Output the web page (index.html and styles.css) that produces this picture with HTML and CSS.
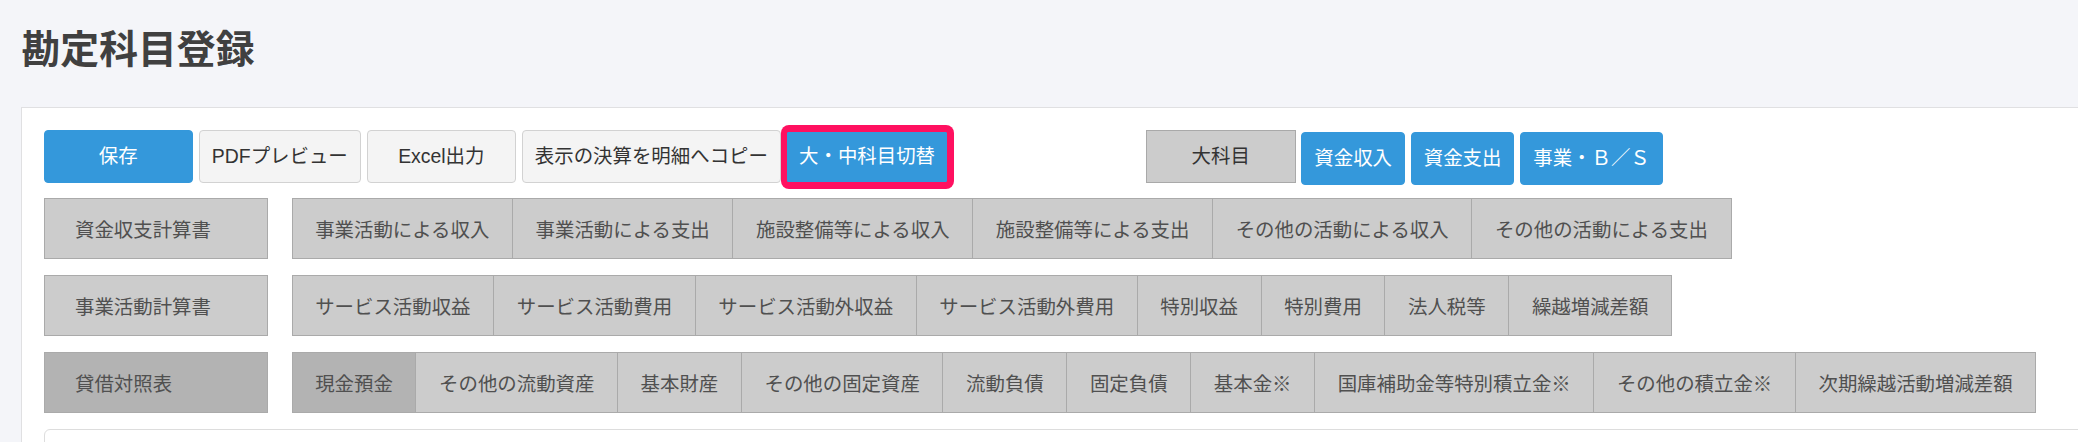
FILE: index.html
```html
<!DOCTYPE html>
<html lang="ja">
<head>
<meta charset="utf-8">
<title>勘定科目登録</title>
<link rel="stylesheet" href="styles.css">
</head>
<body>
<div class="page">
  <h1 class="title">勘定科目登録</h1>
  <div class="card">
    <div class="toolbar">
      <button class="btn btn-primary wide">保存</button>
      <button class="btn">PDFプレビュー</button>
      <button class="btn wide">Excel出力</button>
      <button class="btn">表示の決算を明細へコピー</button>
      <div class="highlight"><button class="btn btn-primary btn-inner">大・中科目切替</button></div>
      <button class="btn btn-flat wide push">大科目</button>
      <button class="btn btn-primary low">資金収入</button>
      <button class="btn btn-primary low">資金支出</button>
      <button class="btn btn-primary low">事業・Ｂ／Ｓ</button>
    </div>
    <div class="rows">
      <div class="row">
        <div class="label">資金収支計算書</div>
        <div class="tabs">
          <div class="tab">事業活動による収入</div>
          <div class="tab">事業活動による支出</div>
          <div class="tab">施設整備等による収入</div>
          <div class="tab">施設整備等による支出</div>
          <div class="tab">その他の活動による収入</div>
          <div class="tab">その他の活動による支出</div>
        </div>
      </div>
      <div class="row">
        <div class="label">事業活動計算書</div>
        <div class="tabs">
          <div class="tab">サービス活動収益</div>
          <div class="tab">サービス活動費用</div>
          <div class="tab">サービス活動外収益</div>
          <div class="tab">サービス活動外費用</div>
          <div class="tab">特別収益</div>
          <div class="tab">特別費用</div>
          <div class="tab">法人税等</div>
          <div class="tab">繰越増減差額</div>
        </div>
      </div>
      <div class="row">
        <div class="label active">貸借対照表</div>
        <div class="tabs">
          <div class="tab active">現金預金</div>
          <div class="tab">その他の流動資産</div>
          <div class="tab">基本財産</div>
          <div class="tab">その他の固定資産</div>
          <div class="tab">流動負債</div>
          <div class="tab">固定負債</div>
          <div class="tab">基本金※</div>
          <div class="tab">国庫補助金等特別積立金※</div>
          <div class="tab">その他の積立金※</div>
          <div class="tab">次期繰越活動増減差額</div>
        </div>
      </div>
    </div>
    <div class="panel"></div>
  </div>
</div>
</body>
</html>
```

FILE: styles.css
```css
html, body {
  margin: 0;
  padding: 0;
  overflow: hidden;
  background: #f4f5f9;
}

body {
  font-family: "Liberation Sans", "Noto Sans CJK JP", sans-serif;
  font-size: 19.43px;
  color: #333;
}

.page {
  box-sizing: border-box;
  padding: 27.3px 0 0 20.5px;
  width: 2140px;
  height: 442px;
  overflow: hidden;
}

.title {
  margin: 0 0 41px 1px;
  font-family: "Noto Sans CJK JP", sans-serif;
  font-size: 38.85px;
  line-height: 38.85px;
  font-weight: 700;
  color: #404040;
}

.card {
  background: #fff;
  border: 1px solid #e0e0e2;
  padding: 22px;
  height: 400px;
}

.toolbar {
  display: flex;
  align-items: flex-start;
  gap: 5.8px;
  height: 53px;
  margin-bottom: 15px;
}

.btn {
  box-sizing: border-box;
  height: 53px;
  padding: 0 12px;
  border: 1px solid #d2d2d2;
  border-radius: 4px;
  background: #f4f4f4;
  color: #333;
  font-family: inherit;
  font-size: 19.43px;
  font-weight: 400;
  line-height: 1.2;
  display: flex;
  align-items: center;
  justify-content: center;
  white-space: nowrap;
}

.wide {
  min-width: 149.5px;
}

.btn-primary {
  background: #3498db;
  border-color: #3498db;
  color: #fff;
}

.btn-flat {
  background: #cccccc;
  border-color: #a9a9a9;
  border-radius: 0;
}

.low {
  margin-top: 2px;
}

.push {
  margin-left: 186px;
}

.highlight {
  background: #ff1060;
  border-radius: 8px;
  padding: 7px 7px 7px 6px;
  margin: -5px 0 -6px -5.8px;
}

.btn-inner {
  height: 50px;
  width: 160.3px;
  border-radius: 1px;
  padding: 0;
}

.rows {
  display: flex;
  flex-direction: column;
  gap: 16px;
}

.row {
  display: flex;
  gap: 23.7px;
  height: 61px;
}

.label {
  box-sizing: border-box;
  width: 224.4px;
  height: 61px;
  padding-left: 30.5px;
  border: 1px solid #aaaaaa;
  background: #cccccc;
  color: #505050;
  display: flex;
  align-items: center;
  font-family: "Noto Sans CJK JP", sans-serif;
}

.label.active {
  background: #b3b3b3;
}

.tabs {
  display: flex;
  border: 1px solid #aaaaaa;
  border-right: 0;
  background: #cccccc;
  height: 59px;
}

.tab {
  padding: 0 22.6px;
  border-right: 1px solid #aaaaaa;
  display: flex;
  align-items: center;
  color: #505050;
  white-space: nowrap;
  font-family: "Noto Sans CJK JP", sans-serif;
}

.tab.active {
  background: #b3b3b3;
}

.panel {
  margin-top: 16px;
  height: 80px;
  border: 1px solid #dddddd;
  border-radius: 6px;
  background: #fff;
}
```
